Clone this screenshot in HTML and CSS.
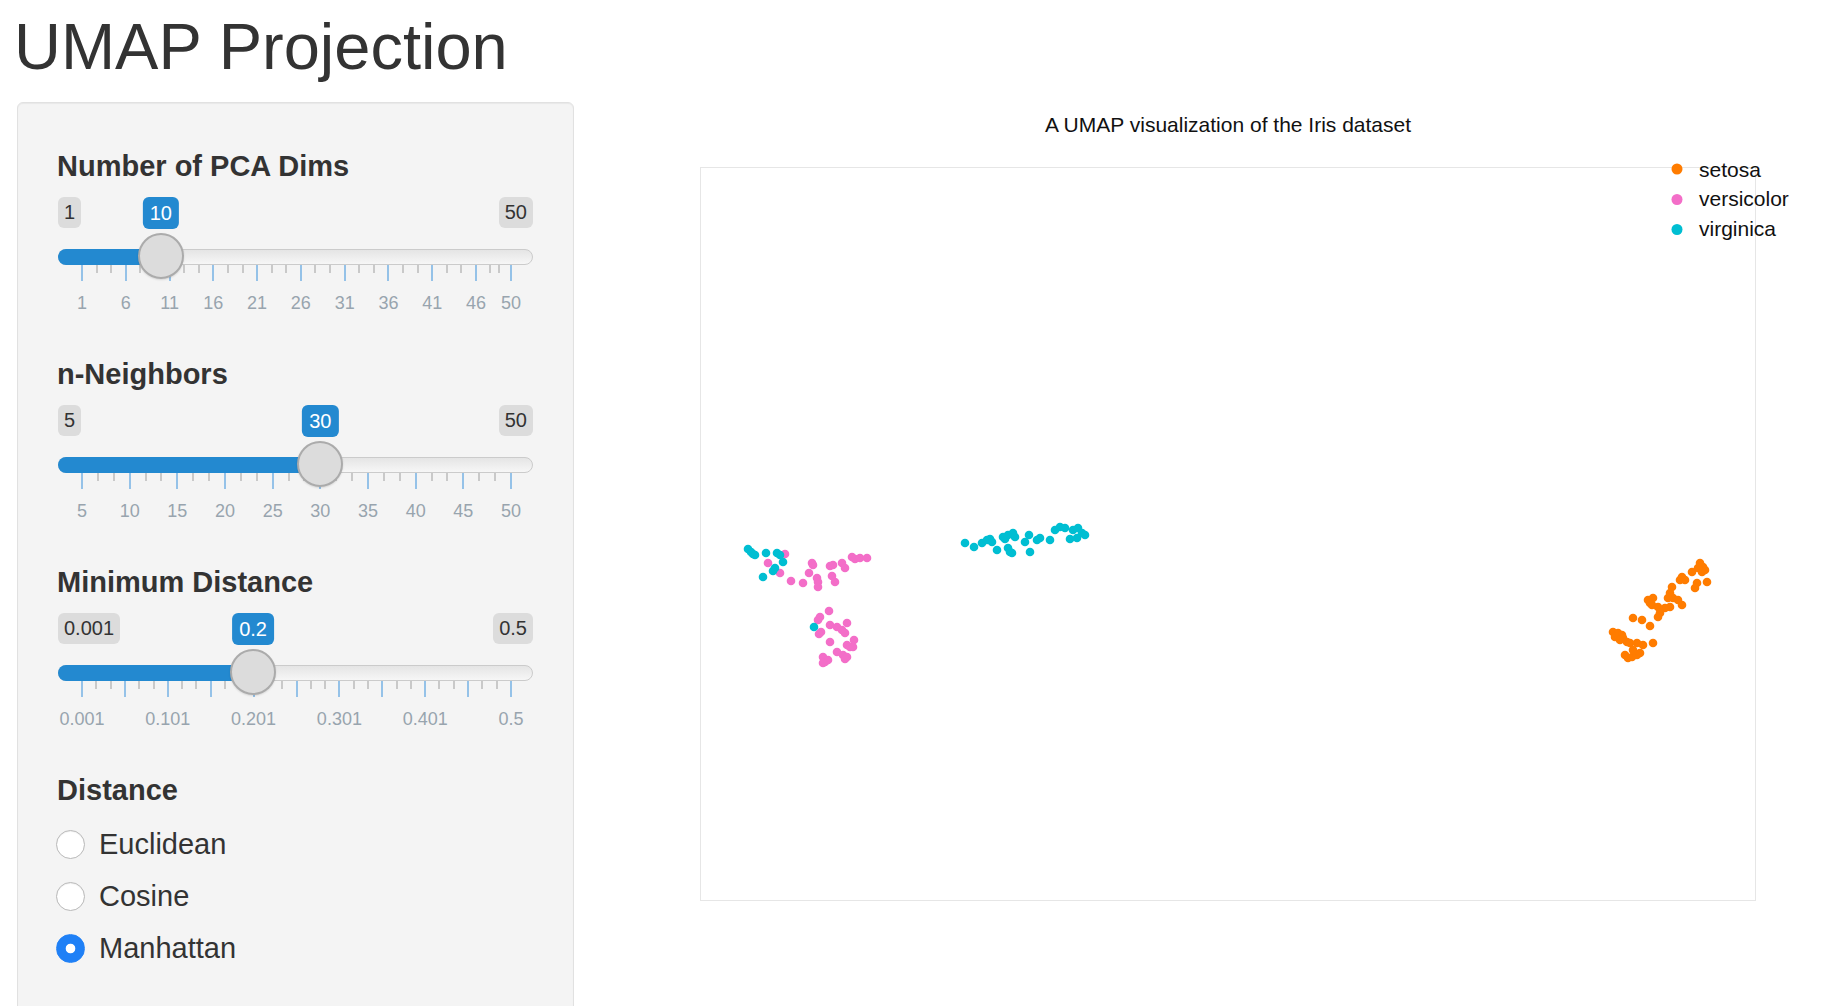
FILE: index.html
```html
<!DOCTYPE html>
<html lang="en">
<head>
<meta charset="utf-8">
<title>UMAP Projection</title>
<link rel="stylesheet" href="styles.css">
</head>
<body>
<div class="page">
  <h1 class="title">UMAP Projection</h1>
  <div class="layout">
    <aside class="well">
      <div class="field">
        <label class="control-label">Number of PCA Dims</label>
        <div class="slider">
          <div class="slider-top">
            <span class="edge">1</span><span class="edge">50</span>
            <div class="value-rail"><span class="value" style="left:18.367%">10</span></div>
          </div>
          <div class="track">
            <div class="bar" style="width:102.8px"></div>
            <div class="handle-rail"><span class="handle" style="left:18.367%"></span></div>
          </div>
          <div class="grid">
            <i class="pol" style="left:0%"></i><i class="pol small" style="left:3.401%"></i><i class="pol small" style="left:6.803%"></i>
            <i class="pol" style="left:10.204%"></i><i class="pol small" style="left:13.605%"></i><i class="pol small" style="left:17.007%"></i>
            <i class="pol" style="left:20.408%"></i><i class="pol small" style="left:23.810%"></i><i class="pol small" style="left:27.211%"></i>
            <i class="pol" style="left:30.612%"></i><i class="pol small" style="left:34.014%"></i><i class="pol small" style="left:37.415%"></i>
            <i class="pol" style="left:40.816%"></i><i class="pol small" style="left:44.218%"></i><i class="pol small" style="left:47.619%"></i>
            <i class="pol" style="left:51.020%"></i><i class="pol small" style="left:54.422%"></i><i class="pol small" style="left:57.823%"></i>
            <i class="pol" style="left:61.224%"></i><i class="pol small" style="left:64.626%"></i><i class="pol small" style="left:68.027%"></i>
            <i class="pol" style="left:71.429%"></i><i class="pol small" style="left:74.830%"></i><i class="pol small" style="left:78.231%"></i>
            <i class="pol" style="left:81.633%"></i><i class="pol small" style="left:85.034%"></i><i class="pol small" style="left:88.435%"></i>
            <i class="pol" style="left:91.837%"></i><i class="pol small" style="left:95.08%"></i><i class="pol small" style="left:97.3%"></i>
            <i class="pol" style="left:100%"></i>
            <span class="gt" style="left:0%">1</span>
            <span class="gt" style="left:10.204%">6</span>
            <span class="gt" style="left:20.408%">11</span>
            <span class="gt" style="left:30.612%">16</span>
            <span class="gt" style="left:40.816%">21</span>
            <span class="gt" style="left:51.020%">26</span>
            <span class="gt" style="left:61.224%">31</span>
            <span class="gt" style="left:71.429%">36</span>
            <span class="gt" style="left:81.633%">41</span>
            <span class="gt" style="left:91.837%">46</span>
            <span class="gt" style="left:100%">50</span>
          </div>
        </div>
      </div>

      <div class="field">
        <label class="control-label">n-Neighbors</label>
        <div class="slider">
          <div class="slider-top">
            <span class="edge">5</span><span class="edge">50</span>
            <div class="value-rail"><span class="value" style="left:55.556%">30</span></div>
          </div>
          <div class="track">
            <div class="bar" style="width:262.3px"></div>
            <div class="handle-rail"><span class="handle" style="left:55.556%"></span></div>
          </div>
          <div class="grid">
            <i class="pol" style="left:0%"></i><i class="pol small" style="left:3.704%"></i><i class="pol small" style="left:7.407%"></i>
            <i class="pol" style="left:11.111%"></i><i class="pol small" style="left:14.815%"></i><i class="pol small" style="left:18.519%"></i>
            <i class="pol" style="left:22.222%"></i><i class="pol small" style="left:25.926%"></i><i class="pol small" style="left:29.630%"></i>
            <i class="pol" style="left:33.333%"></i><i class="pol small" style="left:37.037%"></i><i class="pol small" style="left:40.741%"></i>
            <i class="pol" style="left:44.444%"></i><i class="pol small" style="left:48.148%"></i><i class="pol small" style="left:51.852%"></i>
            <i class="pol" style="left:55.556%"></i><i class="pol small" style="left:59.259%"></i><i class="pol small" style="left:62.963%"></i>
            <i class="pol" style="left:66.667%"></i><i class="pol small" style="left:70.370%"></i><i class="pol small" style="left:74.074%"></i>
            <i class="pol" style="left:77.778%"></i><i class="pol small" style="left:81.481%"></i><i class="pol small" style="left:85.185%"></i>
            <i class="pol" style="left:88.889%"></i><i class="pol small" style="left:92.593%"></i><i class="pol small" style="left:96.296%"></i>
            <i class="pol" style="left:100%"></i>
            <span class="gt" style="left:0%">5</span>
            <span class="gt" style="left:11.111%">10</span>
            <span class="gt" style="left:22.222%">15</span>
            <span class="gt" style="left:33.333%">20</span>
            <span class="gt" style="left:44.444%">25</span>
            <span class="gt" style="left:55.556%">30</span>
            <span class="gt" style="left:66.667%">35</span>
            <span class="gt" style="left:77.778%">40</span>
            <span class="gt" style="left:88.889%">45</span>
            <span class="gt" style="left:100%">50</span>
          </div>
        </div>
      </div>

      <div class="field">
        <label class="control-label">Minimum Distance</label>
        <div class="slider">
          <div class="slider-top">
            <span class="edge">0.001</span><span class="edge">0.5</span>
            <div class="value-rail"><span class="value" style="left:39.880%">0.2</span></div>
          </div>
          <div class="track">
            <div class="bar" style="width:195.1px"></div>
            <div class="handle-rail"><span class="handle" style="left:39.880%"></span></div>
          </div>
          <div class="grid">
            <i class="pol" style="left:0%"></i><i class="pol small" style="left:3.333%"></i><i class="pol small" style="left:6.667%"></i>
            <i class="pol" style="left:10%"></i><i class="pol small" style="left:13.333%"></i><i class="pol small" style="left:16.667%"></i>
            <i class="pol" style="left:20%"></i><i class="pol small" style="left:23.333%"></i><i class="pol small" style="left:26.667%"></i>
            <i class="pol" style="left:30%"></i><i class="pol small" style="left:33.333%"></i><i class="pol small" style="left:36.667%"></i>
            <i class="pol" style="left:40%"></i><i class="pol small" style="left:43.333%"></i><i class="pol small" style="left:46.667%"></i>
            <i class="pol" style="left:50%"></i><i class="pol small" style="left:53.333%"></i><i class="pol small" style="left:56.667%"></i>
            <i class="pol" style="left:60%"></i><i class="pol small" style="left:63.333%"></i><i class="pol small" style="left:66.667%"></i>
            <i class="pol" style="left:70%"></i><i class="pol small" style="left:73.333%"></i><i class="pol small" style="left:76.667%"></i>
            <i class="pol" style="left:80%"></i><i class="pol small" style="left:83.333%"></i><i class="pol small" style="left:86.667%"></i>
            <i class="pol" style="left:90%"></i><i class="pol small" style="left:93.333%"></i><i class="pol small" style="left:96.667%"></i>
            <i class="pol" style="left:100%"></i>
            <span class="gt" style="left:0%">0.001</span>
            <span class="gt" style="left:20%">0.101</span>
            <span class="gt" style="left:40%">0.201</span>
            <span class="gt" style="left:60%">0.301</span>
            <span class="gt" style="left:80%">0.401</span>
            <span class="gt" style="left:100%">0.5</span>
          </div>
        </div>
      </div>

      <div class="field">
        <label class="control-label">Distance</label>
        <div class="radios">
          <label class="radio"><input type="radio" name="distance" value="euclidean"><span>Euclidean</span></label>
          <label class="radio"><input type="radio" name="distance" value="cosine"><span>Cosine</span></label>
          <label class="radio"><input type="radio" name="distance" value="manhattan" checked><span>Manhattan</span></label>
        </div>
      </div>
    </aside>

    <main class="plot">
      <svg class="chart" width="1231" height="904" viewBox="600 102 1231 904" xmlns="http://www.w3.org/2000/svg">
        <text class="ptitle" x="1228" y="132" text-anchor="middle">A UMAP visualization of the Iris dataset</text>
        <rect class="frame" x="700.5" y="167.5" width="1055" height="733"/>
        <g class="setosa">
          <circle cx="1700" cy="563" r="4.3"/><circle cx="1703" cy="567" r="4.3"/><circle cx="1705" cy="570" r="4.3"/><circle cx="1702" cy="572" r="4.3"/><circle cx="1698" cy="568" r="4.3"/>
          <circle cx="1692" cy="572" r="4.3"/><circle cx="1707" cy="582" r="4.3"/><circle cx="1697" cy="583" r="4.3"/><circle cx="1695" cy="588" r="4.3"/><circle cx="1682" cy="577" r="4.3"/>
          <circle cx="1680" cy="580" r="4.3"/><circle cx="1685" cy="580" r="4.3"/><circle cx="1672" cy="587" r="4.3"/><circle cx="1670" cy="593" r="4.3"/><circle cx="1673" cy="598" r="4.3"/>
          <circle cx="1668" cy="598" r="4.3"/><circle cx="1678" cy="600" r="4.3"/><circle cx="1682" cy="605" r="4.3"/><circle cx="1670" cy="607" r="4.3"/><circle cx="1665" cy="608" r="4.3"/>
          <circle cx="1648" cy="600" r="4.3"/><circle cx="1653" cy="598" r="4.3"/><circle cx="1650" cy="603" r="4.3"/><circle cx="1652" cy="605" r="4.3"/><circle cx="1658" cy="607" r="4.3"/>
          <circle cx="1660" cy="613" r="4.3"/><circle cx="1658" cy="617" r="4.3"/><circle cx="1633" cy="618" r="4.3"/><circle cx="1642" cy="620" r="4.3"/><circle cx="1650" cy="626" r="4.3"/>
          <circle cx="1613" cy="632" r="4.3"/><circle cx="1618" cy="633" r="4.3"/><circle cx="1622" cy="635" r="4.3"/><circle cx="1615" cy="637" r="4.3"/><circle cx="1623" cy="638" r="4.3"/>
          <circle cx="1627" cy="642" r="4.3"/><circle cx="1620" cy="640" r="4.3"/><circle cx="1630" cy="643" r="4.3"/><circle cx="1637" cy="643" r="4.3"/><circle cx="1643" cy="645" r="4.3"/>
          <circle cx="1653" cy="643" r="4.3"/><circle cx="1625" cy="655" r="4.3"/><circle cx="1628" cy="658" r="4.3"/><circle cx="1632" cy="657" r="4.3"/><circle cx="1637" cy="655" r="4.3"/>
          <circle cx="1640" cy="653" r="4.3"/><circle cx="1633" cy="650" r="4.3"/>
        </g>
        <g class="versicolor">
          <circle cx="785" cy="554" r="4.3"/><circle cx="768" cy="563" r="4.3"/><circle cx="780" cy="573" r="4.3"/><circle cx="791" cy="581" r="4.3"/><circle cx="803" cy="583" r="4.3"/>
          <circle cx="812" cy="563" r="4.3"/><circle cx="813" cy="565" r="4.3"/><circle cx="809" cy="573" r="4.3"/><circle cx="817" cy="578" r="4.3"/><circle cx="818" cy="582" r="4.3"/>
          <circle cx="818" cy="587" r="4.3"/><circle cx="830" cy="566" r="4.3"/><circle cx="833" cy="565" r="4.3"/><circle cx="832" cy="576" r="4.3"/><circle cx="835" cy="582" r="4.3"/>
          <circle cx="842" cy="563" r="4.3"/><circle cx="845" cy="568" r="4.3"/><circle cx="852" cy="557" r="4.3"/><circle cx="855" cy="559" r="4.3"/><circle cx="860" cy="558" r="4.3"/>
          <circle cx="867" cy="558" r="4.3"/><circle cx="829" cy="611" r="4.3"/><circle cx="820" cy="617" r="4.3"/><circle cx="818" cy="620" r="4.3"/><circle cx="821" cy="632" r="4.3"/>
          <circle cx="819" cy="634" r="4.3"/><circle cx="830" cy="625" r="4.3"/><circle cx="837" cy="627" r="4.3"/><circle cx="842" cy="630" r="4.3"/><circle cx="845" cy="633" r="4.3"/>
          <circle cx="847" cy="623" r="4.3"/><circle cx="830" cy="642" r="4.3"/><circle cx="854" cy="640" r="4.3"/><circle cx="847" cy="645" r="4.3"/><circle cx="850" cy="647" r="4.3"/>
          <circle cx="853" cy="647" r="4.3"/><circle cx="837" cy="652" r="4.3"/><circle cx="843" cy="655" r="4.3"/><circle cx="847" cy="657" r="4.3"/><circle cx="845" cy="659" r="4.3"/>
          <circle cx="823" cy="657" r="4.3"/><circle cx="825" cy="662" r="4.3"/><circle cx="828" cy="660" r="4.3"/><circle cx="823" cy="663" r="4.3"/>
        </g>
        <g class="virginica">
          <circle cx="748" cy="549" r="4.3"/><circle cx="751" cy="552" r="4.3"/><circle cx="753" cy="554" r="4.3"/><circle cx="755" cy="555" r="4.3"/><circle cx="766" cy="553" r="4.3"/>
          <circle cx="777" cy="553" r="4.3"/><circle cx="780" cy="555" r="4.3"/><circle cx="783" cy="562" r="4.3"/><circle cx="775" cy="568" r="4.3"/><circle cx="773" cy="571" r="4.3"/>
          <circle cx="763" cy="577" r="4.3"/><circle cx="814" cy="627" r="4.3"/>
          <circle cx="965" cy="543" r="4.3"/><circle cx="974" cy="547" r="4.3"/><circle cx="982" cy="543" r="4.3"/><circle cx="987" cy="540" r="4.3"/><circle cx="990" cy="539" r="4.3"/>
          <circle cx="992" cy="542" r="4.3"/><circle cx="997" cy="550" r="4.3"/><circle cx="1003" cy="537" r="4.3"/><circle cx="1005" cy="539" r="4.3"/><circle cx="1008" cy="535" r="4.3"/>
          <circle cx="1013" cy="533" r="4.3"/><circle cx="1015" cy="537" r="4.3"/><circle cx="1008" cy="548" r="4.3"/><circle cx="1012" cy="553" r="4.3"/><circle cx="1010" cy="552" r="4.3"/>
          <circle cx="1025" cy="542" r="4.3"/><circle cx="1029" cy="535" r="4.3"/><circle cx="1030" cy="552" r="4.3"/><circle cx="1037" cy="540" r="4.3"/><circle cx="1040" cy="538" r="4.3"/>
          <circle cx="1050" cy="540" r="4.3"/><circle cx="1055" cy="530" r="4.3"/><circle cx="1060" cy="527" r="4.3"/><circle cx="1065" cy="528" r="4.3"/><circle cx="1070" cy="539" r="4.3"/>
          <circle cx="1073" cy="530" r="4.3"/><circle cx="1078" cy="528" r="4.3"/><circle cx="1082" cy="533" r="4.3"/><circle cx="1085" cy="535" r="4.3"/><circle cx="1077" cy="538" r="4.3"/>
        </g>
        <g class="legend">
          <circle class="setosa" cx="1677" cy="169" r="5.5"/>
          <text x="1699" y="176.5">setosa</text>
          <circle class="versicolor" cx="1677" cy="199.5" r="5.5"/>
          <text x="1699" y="206">versicolor</text>
          <circle class="virginica" cx="1677" cy="229.5" r="5.5"/>
          <text x="1699" y="235.5">virginica</text>
        </g>
      </svg>
    </main>
  </div>
</div>
</body>
</html>
```

FILE: styles.css
```css
* { box-sizing: border-box; }

html, body {
  margin: 0;
  height: 100%;
  overflow: hidden;
  background: #ffffff;
}

body {
  font-family: "Liberation Sans", Arial, Helvetica, sans-serif;
  color: #333333;
}

.page {
  padding-left: 17px;
}

.title {
  margin: 0 0 0 -3px;
  padding-top: 7px;
  font-size: 65px;
  line-height: 80px;
  font-weight: 400;
  color: #333333;
}

.layout {
  display: flex;
  align-items: flex-start;
  margin-top: 15px;
}

.well {
  flex: none;
  width: 557px;
  height: 960px;
  padding: 46px 40px 0;
  background: #f4f4f4;
  border: 1px solid #e1e1e1;
  border-radius: 6px;
  box-shadow: inset 0 1px 1px rgba(0, 0, 0, 0.05);
}

.field {
  margin-bottom: 36px;
}

.control-label {
  display: block;
  margin-left: -1px;
  font-size: 29px;
  line-height: 34px;
  font-weight: 700;
  color: #333333;
}

/* slider */
.slider {
  margin-top: 14px;
}

.slider-top {
  position: relative;
  display: flex;
  justify-content: space-between;
  height: 31px;
}

.edge {
  padding: 2px 6px;
  font-size: 20px;
  line-height: 27px;
  color: #333333;
  background: #dcdcdc;
  border-radius: 6px;
}

.value-rail {
  position: absolute;
  top: 0;
  bottom: 0;
  left: 24px;
  right: 22px;
}

.value {
  position: absolute;
  top: 0;
  transform: translateX(-50%);
  padding: 3px 7px 2px;
  font-size: 20px;
  line-height: 27px;
  color: #ffffff;
  background: #2389d0;
  border-radius: 6px;
  white-space: nowrap;
}

.track {
  position: relative;
  height: 16px;
  margin-top: 21px;
  border: 1px solid #cbcbcb;
  border-radius: 8px;
  background: linear-gradient(#dcdcdc -50%, #ffffff 150%);
}

.bar {
  position: absolute;
  top: -1px;
  bottom: -1px;
  left: -1px;
  background: #2389d0;
  border-radius: 8px 0 0 8px;
}

.handle-rail {
  position: absolute;
  top: 50%;
  left: 23px;
  right: 21px;
  height: 0;
}

.handle {
  position: absolute;
  z-index: 2;
  top: 0;
  width: 46px;
  height: 46px;
  margin: -24px 0 0 -23px;
  border-radius: 50%;
  background: #dcdcdc;
  border: 2px solid #ababab;
  box-shadow: 0 1px 2px rgba(0, 0, 0, 0.12);
}

.grid {
  position: relative;
  height: 56px;
  margin: 0 22px 0 24px;
}

.pol {
  position: absolute;
  top: 0;
  width: 2px;
  height: 16px;
  margin-left: -1px;
  background: #95c2e8;
}

.pol.small {
  height: 8px;
  background: #c9c9c9;
}

.gt {
  position: absolute;
  top: 28px;
  transform: translateX(-50%);
  font-size: 18px;
  line-height: 20px;
  color: #98a4ae;
  white-space: nowrap;
}

/* radios */
.radios {
  margin-top: 11px;
}

.radio {
  display: flex;
  align-items: center;
  height: 52.3px;
  font-size: 29px;
  font-weight: 400;
  color: #333333;
}

.radio input {
  -webkit-appearance: none;
  appearance: none;
  flex: none;
  width: 29px;
  height: 29px;
  margin: 0 14px 0 -2px;
  border-radius: 50%;
  border: 1px solid #b8b8b8;
  background: #ffffff;
  box-shadow: inset 0 1px 1px rgba(0, 0, 0, 0.06);
}

.radio input:checked {
  border-color: #1f80f6;
  background: radial-gradient(circle, #ffffff 0 4.4px, #1f80f6 5.2px);
  box-shadow: none;
}

/* plot */
.plot {
  flex: none;
  margin-left: 26px;
}

.chart {
  display: block;
  font-family: "Liberation Sans", Arial, Helvetica, sans-serif;
}

.ptitle {
  font-size: 21px;
  fill: #111111;
}

.frame {
  fill: none;
  stroke: #e6e6e6;
  stroke-width: 1;
}

.setosa { fill: #ff7c00; }
.versicolor { fill: #f36ec8; }
.virginica { fill: #00bed2; }

.legend text {
  font-size: 21px;
  fill: #111111;
}
```
